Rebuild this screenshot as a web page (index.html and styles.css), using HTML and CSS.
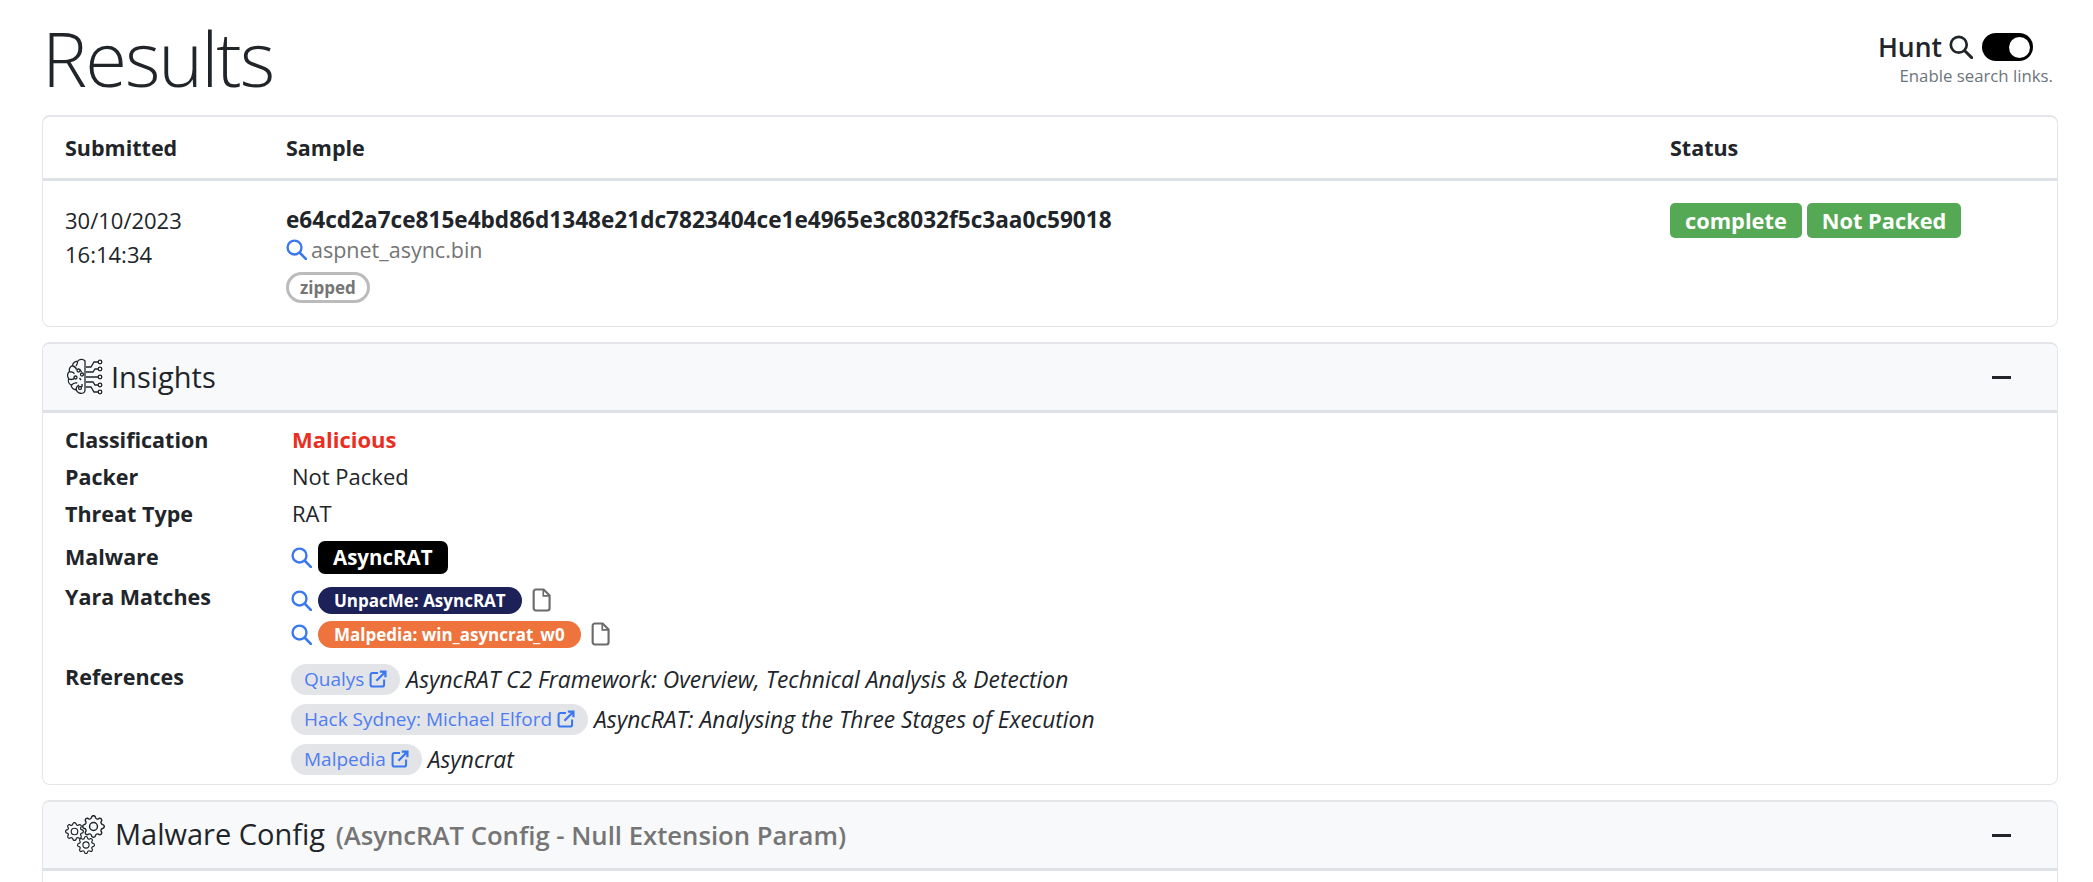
FILE: index.html
```html
<!DOCTYPE html>
<html lang="en">
<head>
    <meta charset="UTF-8">
    <title>Results</title>
    <link rel="stylesheet" href="styles.css">
</head>
<body>
    <svg class="defs" width="0" height="0">
        <symbol id="i-search" viewBox="0 0 16 16">
            <circle cx="6.5" cy="6.5" r="5.3" fill="none" stroke="currentColor" stroke-width="1.8"/>
            <path d="M10.5 10.5l4.6 4.6" fill="none" stroke="currentColor" stroke-width="2" stroke-linecap="round"/>
        </symbol>
        <symbol id="i-file" viewBox="0 0 16 20">
            <path d="M3.200 1.200h6.600l5 5v10.800a1.800 1.800 0 0 1-1.800 1.800H3.200a1.800 1.800 0 0 1-1.800-1.800V3a1.800 1.800 0 0 1 1.800-1.800z" fill="none" stroke="currentColor" stroke-width="1.800"/>
            <path d="M9.500 1.200v5.300h5.300" fill="none" stroke="currentColor" stroke-width="1.400"/>
        </symbol>
        <symbol id="i-link" viewBox="0 0 16 16">
            <path d="M8 2.600H3a1.600 1.600 0 0 0-1.600 1.600V13A1.600 1.600 0 0 0 3 14.600h8.800a1.600 1.600 0 0 0 1.600-1.600V8.400" fill="none" stroke="currentColor" stroke-width="1.800"/>
            <path d="M6.600 9.600L14.400 1.800M9.600 1.400h5v5" fill="none" stroke="currentColor" stroke-width="2"/>
        </symbol>
        <symbol id="i-gear" viewBox="0 0 16 16">
            <path fill="currentColor" d="M8 4.754a3.246 3.246 0 1 0 0 6.492 3.246 3.246 0 0 0 0-6.492zM5.754 8a2.246 2.246 0 1 1 4.492 0 2.246 2.246 0 0 1-4.492 0z"/>
            <path fill="currentColor" d="M9.796 1.343c-.527-1.79-3.065-1.79-3.592 0l-.094.319a.873.873 0 0 1-1.255.52l-.292-.16c-1.64-.892-3.433.902-2.54 2.541l.159.292a.873.873 0 0 1-.52 1.255l-.319.094c-1.79.527-1.79 3.065 0 3.592l.319.094a.873.873 0 0 1 .52 1.255l-.16.292c-.892 1.64.901 3.434 2.541 2.54l.292-.159a.873.873 0 0 1 1.255.52l.094.319c.527 1.79 3.065 1.79 3.592 0l.094-.319a.873.873 0 0 1 1.255-.52l.292.16c1.64.893 3.434-.902 2.54-2.541l-.159-.292a.873.873 0 0 1 .52-1.255l.319-.094c1.79-.527 1.79-3.065 0-3.592l-.319-.094a.873.873 0 0 1-.52-1.255l.16-.292c.893-1.64-.902-3.433-2.541-2.54l-.292.159a.873.873 0 0 1-1.255-.52l-.094-.319zm-2.633.283c.246-.835 1.428-.835 1.674 0l.094.319a1.873 1.873 0 0 0 2.693 1.115l.291-.16c.764-.415 1.6.42 1.184 1.185l-.159.292a1.873 1.873 0 0 0 1.116 2.692l.318.094c.835.246.835 1.428 0 1.674l-.319.094a1.873 1.873 0 0 0-1.115 2.693l.16.291c.415.764-.42 1.6-1.185 1.184l-.291-.159a1.873 1.873 0 0 0-2.693 1.116l-.094.318c-.246.835-1.428.835-1.674 0l-.094-.319a1.873 1.873 0 0 0-2.692-1.115l-.292.16c-.764.415-1.6-.42-1.184-1.185l.159-.291A1.873 1.873 0 0 0 1.945 8.93l-.319-.094c-.835-.246-.835-1.428 0-1.674l.319-.094A1.873 1.873 0 0 0 3.06 4.377l-.16-.292c-.415-.764.42-1.6 1.185-1.184l.292.159a1.873 1.873 0 0 0 2.692-1.115l.094-.319z"/>
        </symbol>
    </svg>

    <div class="container">
        <div class="title-row">
            <h1>Results</h1>
            <div class="hunt">
                <div class="hunt-line">
                    <span>Hunt</span>
                    <svg class="hunt-icon"><use href="#i-search"/></svg>
                    <span class="switch"><span class="knob"></span></span>
                </div>
                <small>Enable search links.</small>
            </div>
        </div>

        <!-- Sample -->
        <section class="card sample">
            <div class="sample-row sample-head">
                <div>Submitted</div>
                <div>Sample</div>
                <div>Status</div>
            </div>
            <div class="sample-row sample-body">
                <div class="date">30/10/2023<br>16:14:34</div>
                <div>
                    <div class="hash">e64cd2a7ce815e4bd86d1348e21dc7823404ce1e4965e3c8032f5c3aa0c59018</div>
                    <div class="filename">
                        <svg class="search"><use href="#i-search"/></svg>
                        <span>aspnet_async.bin</span>
                    </div>
                    <span class="zipped">zipped</span>
                </div>
                <div class="status">
                    <span class="tag">complete</span>
                    <span class="tag">Not Packed</span>
                </div>
            </div>
        </section>

        <!-- Insights -->
        <section class="card">
            <header class="card-head">
                <svg class="head-icon" viewBox="0 0 40 40" fill="none" stroke="currentColor" stroke-width="1.3">
                    <path d="M20 4c-2-2.500-6-2-7.500.5-2.500-.3-5 1.500-5 4.200-2.500.8-3.800 3.500-3 5.800-2.200 1.500-2.700 5-.8 7-1 2.500 0 5.300 2.500 6.500 0 3 2.500 5 5 4.700 1 3 4 4.500 7 3.300 1.200-.5 1.800-1.300 1.800-2.500V4z"/>
                    <path d="M7.500 9c2 .3 3.500 1.500 4 3.500M12.500 5c0 2-.5 3-1.500 4M4.500 15c2-.5 4 0 5 1.800M3.700 22c2.200.8 4.800.3 6.300-1.300M6.200 28.500c1.500-2 3.500-3 6-2.500M11 33c0-2 1-4 3-5M15 12.500l1.500 2.500M14.500 21l1.500 2M17 27v3"/>
                    <circle cx="13.500" cy="13.500" r="1.500"/><circle cx="17" cy="17.500" r="1.500"/><circle cx="10.500" cy="20.500" r="1.500"/><circle cx="15" cy="31" r="1.500"/>
                    <path d="M21 10h5l3-5h4M21 15h7l2-3h3M21 20h12M21 25h7l2 3h3M21 30h5l3 5h4"/>
                    <circle cx="35" cy="5" r="1.800"/><circle cx="35" cy="12" r="1.800"/><circle cx="35" cy="20" r="1.800"/><circle cx="35" cy="28" r="1.800"/><circle cx="35" cy="35" r="1.800"/>
                </svg>
                <span class="head-title">Insights</span>
                <span class="minus"></span>
            </header>
            <div class="insights">
                <div class="label">Classification</div>
                <div class="value malicious">Malicious</div>
                <div class="label">Packer</div>
                <div class="value">Not Packed</div>
                <div class="label">Threat Type</div>
                <div class="value">RAT</div>
                <div class="label label-malware">Malware</div>
                <div class="value value-malware">
                    <svg class="search"><use href="#i-search"/></svg>
                    <span class="family">AsyncRAT</span>
                </div>
                <div class="label label-yara">Yara Matches</div>
                <div class="value value-yara">
                    <div class="yara-line">
                        <svg class="search"><use href="#i-search"/></svg>
                        <span class="rule rule-unpacme">UnpacMe: AsyncRAT</span>
                        <svg class="file"><use href="#i-file"/></svg>
                    </div>
                    <div class="yara-line">
                        <svg class="search"><use href="#i-search"/></svg>
                        <span class="rule rule-malpedia">Malpedia: win_asyncrat_w0</span>
                        <svg class="file"><use href="#i-file"/></svg>
                    </div>
                </div>
                <div class="label label-refs">References</div>
                <div class="value value-refs">
                    <div class="ref">
                        <a class="ref-link">Qualys <svg class="link"><use href="#i-link"/></svg></a>
                        <em>AsyncRAT C2 Framework: Overview, Technical Analysis &amp; Detection</em>
                    </div>
                    <div class="ref">
                        <a class="ref-link">Hack Sydney: Michael Elford <svg class="link"><use href="#i-link"/></svg></a>
                        <em>AsyncRAT: Analysing the Three Stages of Execution</em>
                    </div>
                    <div class="ref">
                        <a class="ref-link">Malpedia <svg class="link"><use href="#i-link"/></svg></a>
                        <em>Asyncrat</em>
                    </div>
                </div>
            </div>
        </section>

        <!-- Malware config -->
        <section class="card card-last">
            <header class="card-head">
                <svg class="head-icon head-icon-wide" viewBox="0 0 40 40">
                    <use href="#i-gear" x="17" y="0" width="23" height="23"/>
                    <use href="#i-gear" x="0" y="7" width="19" height="19"/>
                    <use href="#i-gear" x="12" y="21" width="18" height="18"/>
                </svg>
                <span class="head-title">Malware Config <b>(AsyncRAT Config - Null Extension Param)</b></span>
                <span class="minus"></span>
            </header>
            <div class="card-rest"></div>
        </section>
    </div>
</body>
</html>
```

FILE: styles.css
```css
/* page */
body {
    margin: 0;
    font-family: "Open Sans", "Noto Sans", sans-serif;
    font-size: 22px;
    line-height: 34px;
    color: #212529;
    background: #fff;
    overflow: hidden;
}
.defs {
    position: absolute;
}
.container {
    margin: 0 35px 0 42px;
}

/* title */
.title-row {
    display: flex;
    justify-content: space-between;
    height: 115px;
}
h1 {
    margin: 0;
    padding-top: 10px;
    font-size: 76px;
    font-weight: 300;
    line-height: 96px;
    letter-spacing: -2px;
}
.hunt {
    display: flex;
    flex-direction: column;
    align-items: flex-end;
    padding: 30px 5px 0 0;
}
.hunt-line {
    display: flex;
    align-items: center;
    height: 34px;
    padding-right: 20px;
    font-size: 26.500px;
    font-weight: 600;
}
.hunt-icon {
    width: 24px;
    height: 24px;
    margin: 0 9px 0 7px;
}
.switch {
    display: flex;
    justify-content: flex-end;
    align-items: center;
    width: 51px;
    height: 28px;
    padding: 0 3px;
    box-sizing: border-box;
    border-radius: 14px;
    background: #000;
}
.knob {
    width: 21px;
    height: 21px;
    border-radius: 50%;
    background: #fff;
}
.hunt small {
    font-size: 16.800px;
    line-height: 24px;
    color: #6c757d;
}

/* cards */
.card {
    margin-bottom: 15px;
    border: 2px solid #e3e5e8;
    border-width: 2px 1px 1px;
    border-radius: 8px;
    overflow: hidden;
}
.card-last {
    margin-bottom: 0;
    border-bottom: none;
    border-radius: 8px 8px 0 0;
}
.card-rest {
    height: 13px;
}
.card-head {
    display: flex;
    align-items: center;
    height: 66px;
    padding: 0 46px 0 22px;
    background: #f8f9fa;
    border-bottom: 3px solid #dee2e6;
    font-size: 29px;
}
.head-icon {
    flex: none;
    width: 40px;
    height: 40px;
    margin-right: 6px;
}
.head-icon-wide {
    margin-right: 10px;
}
.head-title {
    flex: 1;
}
.head-title b {
    margin-left: 3px;
    font-size: 25.700px;
    font-weight: 600;
    color: #757575;
}
.minus {
    width: 19px;
    height: 3px;
    background: #212529;
}

/* sample table */
.sample-row {
    display: grid;
    grid-template-columns: 221px 1384px 1fr;
    padding: 0 22px;
}
.sample-head {
    height: 61px;
    align-items: center;
    border-bottom: 3px solid #dee2e6;
    font-size: 21.500px;
    font-weight: 700;
}
.sample-body {
    height: 145px;
    padding-top: 24px;
    box-sizing: border-box;
}
.date {
    margin-top: -2px;
}
.hash {
    font-size: 22.600px;
    font-weight: 700;
    line-height: 30px;
}
.filename {
    display: flex;
    align-items: center;
    gap: 4px;
    height: 29px;
    font-size: 21.500px;
    color: #757575;
}
.search {
    flex: none;
    width: 21px;
    height: 21px;
    color: #3b78f0;
}
.zipped {
    display: inline-block;
    margin-top: 8px;
    padding: 0 11px;
    border: 3px solid #bbb;
    border-radius: 16px;
    font-size: 17px;
    font-weight: 700;
    line-height: 25px;
    color: #757575;
}
.status {
    display: flex;
    gap: 5px;
    align-items: flex-start;
}
.tag {
    margin-top: -2px;
    padding: 0 15px;
    border-radius: 5px;
    background: #55a854;
    color: #fff;
    font-size: 21.800px;
    font-weight: 700;
    line-height: 35px;
}

/* insights */
.insights {
    display: grid;
    grid-template-columns: 227px 1fr;
    padding: 8px 22px 5px;
}
.label {
    font-size: 21.500px;
    font-weight: 700;
    line-height: 37px;
}
.value {
    line-height: 37px;
}
.malicious {
    color: #ea2e22;
    font-weight: 700;
}
.value-malware {
    display: flex;
    align-items: center;
    gap: 6px;
    height: 50px;
    margin-left: -1px;
}
.label-malware {
    line-height: 50px;
}
.family {
    padding: 0 15px;
    border-radius: 7px;
    background: #000;
    color: #fff;
    font-size: 20.500px;
    font-weight: 700;
    line-height: 33px;
}
.value-yara {
    margin-left: -1px;
    padding-top: 1px;
}
.label-yara {
    line-height: 29px;
}
.yara-line {
    display: flex;
    align-items: center;
    gap: 6px;
    height: 34px;
}
.rule {
    padding: 0 16px;
    border-radius: 14px;
    color: #fff;
    font-size: 17px;
    font-weight: 700;
    line-height: 27px;
}
.rule-unpacme {
    background: #1c2158;
}
.rule-malpedia {
    background: #ee733c;
}
.file {
    width: 19px;
    height: 24px;
    margin-left: 4px;
    color: #6b6b6b;
}
.label-refs {
    line-height: 52px;
}
.value-refs {
    margin-left: -1px;
    padding-top: 8px;
}
.ref {
    display: flex;
    align-items: center;
    gap: 6px;
    height: 40px;
}
.ref-link {
    display: flex;
    align-items: center;
    gap: 5px;
    padding: 0 13px;
    border-radius: 16px;
    background: #e3e4e7;
    color: #4f7df3;
    font-size: 19px;
    line-height: 31px;
}
.link {
    width: 18px;
    height: 18px;
    color: #3b78f0;
}
.ref em {
    font-size: 22.800px;
}
```
